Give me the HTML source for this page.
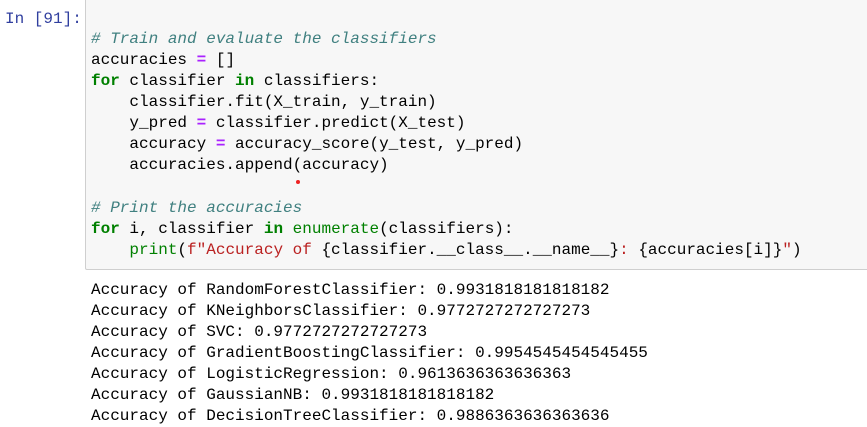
<!DOCTYPE html>
<html><head><style>
body{margin:0;width:867px;height:427px;background:#fff;overflow:hidden;position:relative;font-family:"Liberation Mono",monospace;font-size:16px;}
.p{position:absolute;left:5px;top:10px;color:#303f9f;}
.box{position:absolute;left:85px;top:-2px;width:800px;height:270px;background:#f7f7f7;border:1px solid #cfcfcf;border-radius:2px;}
.l{position:absolute;left:91px;white-space:pre;line-height:21px;color:#000;}
.c{color:#408080;font-style:italic}
.k{color:#008000;font-weight:bold}
.o{color:#aa22ff;font-weight:bold}
.b{color:#008000}
.s{color:#ba2121}
.dot{position:absolute;left:296px;top:180px;width:4px;height:4px;border-radius:50%;background:#e22;}
</style></head><body>
<div class="p">In [91]:</div>
<div class="box"></div>
<div class="l" style="top:29px"><span class="c"># Train and evaluate the classifiers</span></div>
<div class="l" style="top:50px">accuracies <span class="o">=</span> []</div>
<div class="l" style="top:71px"><span class="k">for</span> classifier <span class="k">in</span> classifiers:</div>
<div class="l" style="top:92px">    classifier.fit(X_train, y_train)</div>
<div class="l" style="top:113px">    y_pred <span class="o">=</span> classifier.predict(X_test)</div>
<div class="l" style="top:134px">    accuracy <span class="o">=</span> accuracy_score(y_test, y_pred)</div>
<div class="l" style="top:155px">    accuracies.append(accuracy)</div>
<div class="dot"></div>
<div class="l" style="top:198px"><span class="c"># Print the accuracies</span></div>
<div class="l" style="top:219px"><span class="k">for</span> i, classifier <span class="k">in</span> <span class="b">enumerate</span>(classifiers):</div>
<div class="l" style="top:240px">    <span class="b">print</span>(<span class="s">f"Accuracy of </span>{classifier.__class__.__name__}<span class="s">: </span>{accuracies[i]}<span class="s">"</span>)</div>
<div class="l" style="top:280px">Accuracy of RandomForestClassifier: 0.9931818181818182</div>
<div class="l" style="top:301px">Accuracy of KNeighborsClassifier: 0.9772727272727273</div>
<div class="l" style="top:322px">Accuracy of SVC: 0.9772727272727273</div>
<div class="l" style="top:343px">Accuracy of GradientBoostingClassifier: 0.9954545454545455</div>
<div class="l" style="top:364px">Accuracy of LogisticRegression: 0.9613636363636363</div>
<div class="l" style="top:385px">Accuracy of GaussianNB: 0.9931818181818182</div>
<div class="l" style="top:406px">Accuracy of DecisionTreeClassifier: 0.9886363636363636</div>
</body></html>
